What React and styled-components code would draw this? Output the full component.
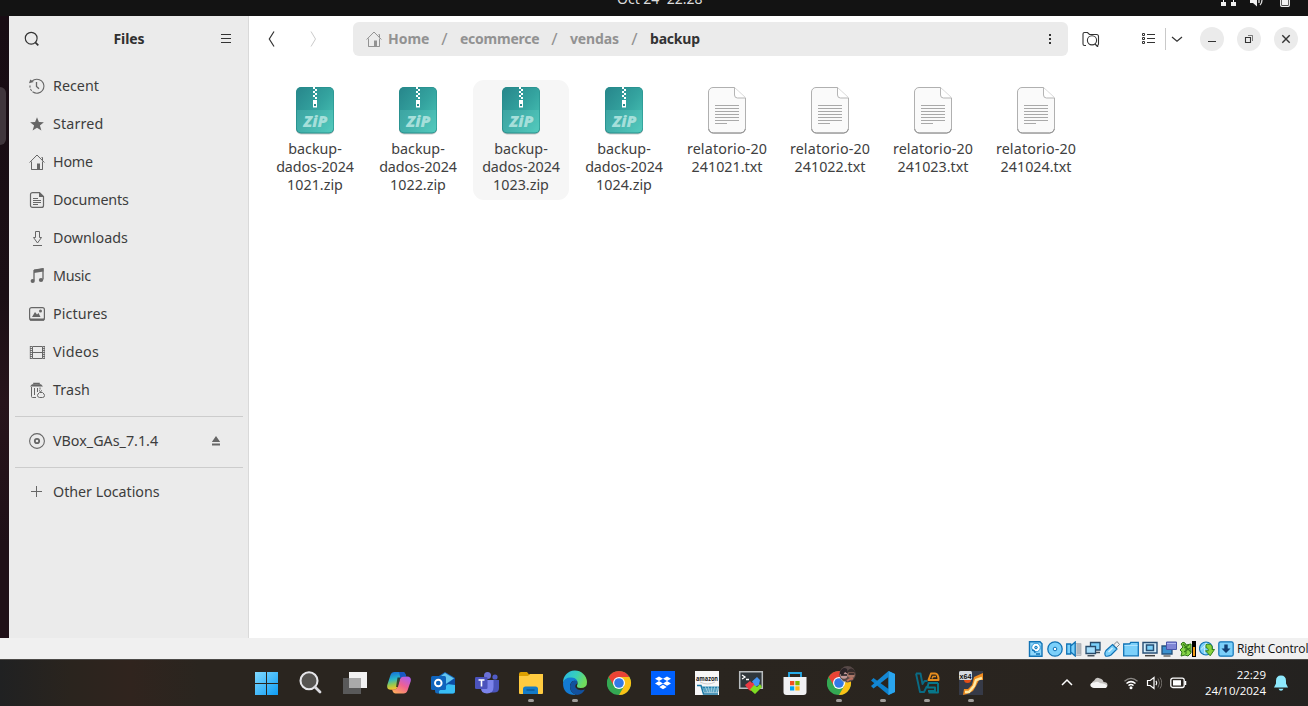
import React from "react";
import styled, { createGlobalStyle } from "styled-components";

const Global = createGlobalStyle`
  * { box-sizing: border-box; }
  body { margin: 0; overflow: hidden; background: #131313; }
  svg { display: block; flex: none; }
`;

const Desktop = styled.div`
  width: 1308px;
  height: 706px;
  display: flex;
  flex-direction: column;
  overflow: hidden;
  font-family: "Noto Sans", "Open Sans", sans-serif;
  font-size: 14.3px;
  color: #3d3d3d;
`;

const TopBar = styled.div`
  height: 16px;
  flex: none;
  background: #131313;
  color: #dcdcdc;
  display: grid;
  grid-template-columns: 617px 86px 1fr;
  overflow: hidden;
`;
const TopClock = styled.div`
  grid-column: 2;
  margin-top: -11px;
  height: 20px;
  line-height: 20px;
  font-size: 14px;
  white-space: pre;
  letter-spacing: ${(p) => p.$track || "0"};
`;
const TopIcons = styled.div`
  display: flex;
  justify-content: flex-end;
  padding-right: 16px;
`;

const Body = styled.div`
  height: 622px;
  display: flex;
  flex: none;
`;
const Dock = styled.div`
  width: 9px;
  flex: none;
  background: linear-gradient(#180c13, #1b0f15 45%, #27141b 62%, #1f1017 85%, #1f1017);
  padding-top: 71px;
`;
const DockTile = styled.div`
  width: 6px;
  height: 58px;
  background: #40363c;
  border-radius: 0 6px 6px 0;
`;

const Sidebar = styled.aside`
  width: 240px;
  flex: none;
  background: #ebebeb;
  border-right: 1px solid #d9d9d9;
`;
const SideHead = styled.div`
  height: 46px;
  padding: 0 14px 0 15px;
  display: flex;
  align-items: center;
  justify-content: space-between;
  color: #333;
  margin-bottom: 5px;
`;
const Title = styled.div`
  font-weight: 700;
  font-size: 14px;
  color: #303030;
  letter-spacing: -0.1px;
  padding-bottom: 2px;
`;
const SideRow = styled.div`
  height: 38px;
  padding: 0 28px 0 20px;
  display: flex;
  align-items: center;
  color: #666;
`;
const SideLabel = styled.span`
  flex: 1;
  margin-left: 8px;
  padding-bottom: 2px;
  color: #3d3d3d;
  letter-spacing: ${(p) => p.$track || "0"};
  white-space: nowrap;
`;
const Separator = styled.div`
  height: 1px;
  margin: ${(p) => p.$top}px 5px 5px 6px;
  background: #cccccc;
`;

const Main = styled.main`
  flex: 1;
  min-width: 0;
  background: #fff;
`;
const Header = styled.header`
  height: 46px;
  display: flex;
  align-items: center;
  color: #333;
  padding-left: 14px;
`;
const NavButton = styled.div`
  width: 18px;
  flex: none;
  margin-right: ${(p) => p.$after}px;
  opacity: ${(p) => (p.$off ? 0.25 : 1)};
`;
const PathBar = styled.div`
  width: 715px;
  height: 34px;
  flex: none;
  border-radius: 6px;
  background: #ebebeb;
  display: flex;
  align-items: center;
  padding: 0 10px 0 13px;
  color: #929292;
`;
const Crumb = styled.span`
  width: ${(p) => p.$w}px;
  padding-bottom: 2px;
  font-weight: 700;
  font-size: 14px;
  white-space: nowrap;
  letter-spacing: ${(p) => p.$track || "0"};
  color: ${(p) => (p.$current ? "#333" : "#929292")};
`;
const Slash = styled.span`
  width: ${(p) => p.$w}px;
  text-align: center;
  font-size: 17px;
  line-height: 20px;
`;
const Spacer = styled.span`
  flex: ${(p) => (p.$w ? "none" : 1)};
  width: ${(p) => p.$w || 0}px;
`;
const VLine = styled.span`
  width: 1px;
  height: 22px;
  background: #c9c9c9;
`;
const RoundButton = styled.span`
  width: 24px;
  height: 24px;
  flex: none;
  border-radius: 50%;
  background: #ebebeb;
  margin-right: ${(p) => (p.$last ? 0 : 13)}px;
  display: flex;
  align-items: center;
  justify-content: center;
`;

const FileGrid = styled.div`
  display: flex;
  gap: 7px;
  padding: 18px 0 0 18px;
  margin-left: ${(p) => p.$shift || 0}px;
`;
const FileCell = styled.div`
  width: 96px;
  height: 120px;
  flex: none;
  margin-left: 0;
  border-radius: 11px;
  background: ${(p) => (p.$hover ? "#f6f6f6" : "transparent")};
  display: flex;
  flex-direction: column;
  align-items: center;
  padding-top: 6px;
`;
const FileName = styled.div`
  margin-top: 4px;
  line-height: 18px;
  text-align: center;
  white-space: pre;
  color: #404040;
`;
const NameLine = styled.div`
  letter-spacing: ${(p) => p.$track || "0"};
`;

const VmBar = styled.div`
  height: 21px;
  flex: none;
  background: #f0f0f0;
  display: flex;
  align-items: center;
  justify-content: flex-end;
  gap: 3px;
`;
const HostKey = styled.span`
  width: 71px;
  font-size: 12px;
  color: #111;
  white-space: nowrap;
  letter-spacing: ${(p) => p.$track || "0"};
  font-family: "Open Sans", "Noto Sans", sans-serif;
`;

const Taskbar = styled.div`
  height: 47px;
  flex: none;
  border-top: 1px solid #4c4a48;
  background: linear-gradient(90deg, #202122 0, #2a241e 70px, #30241e 130px, #2a251f 200px, #2a251f 700px, #29241f 1100px, #242220 100%);
  display: flex;
  color: #fff;
`;
const Apps = styled.div`
  margin-left: 244.5px;
  display: flex;
`;
const AppSlot = styled.div`
  width: 44px;
  padding-top: 11px;
  display: flex;
  flex-direction: column;
  align-items: center;
  svg { overflow: visible; }
`;
const RunDot = styled.span`
  width: 6px;
  height: 3px;
  margin-top: 4px;
  border-radius: 2px;
  background: #a09d9a;
`;
const Tray = styled.div`
  margin-left: 65.5px;
  display: flex;
  align-items: center;
  height: 46px;
`;
const Clock = styled.div`
  width: 72px;
  text-align: right;
  font-family: "Open Sans", "Noto Sans", sans-serif;
  font-size: 11.5px;
  line-height: 16px;
  white-space: nowrap;
  letter-spacing: ${(p) => p.$track || "0"};
`;

const Ico = ({ s = 16, w = s, h = s, vb, children, ...r }) => (
  <svg width={w} height={h} viewBox={vb || `0 0 ${w} ${h}`} fill="none" stroke="currentColor" strokeWidth="1" {...r}>
    {children}
  </svg>
);

const SearchIcon = () => (
  <Ico strokeWidth="1.15"><circle cx="7.200" cy="7.200" r="5.900" /><path d="M11.300 11.300l3 3" strokeWidth="1.700" /></Ico>
);
const MenuIcon = () => (
  <Ico><path d="M3 3.500h10M3 7.500h10M3 11.500h10" /></Ico>
);
const HomeIcon = () => (
  <Ico>
    <path d="M.6 8.500L8 1l7.400 7.500M2.500 7.500v8h4M9.500 15.500h4v-8M12.500 3.500h1v3" />
    <path d="M8 9.500h3v6h-3z" fill="currentColor" stroke="none" />
    <path d="M2.500 15.500h11" />
  </Ico>
);
const RecentIcon = () => (
  <Ico strokeWidth="1.1">
    <path d="M3 3.200A7 7 0 1 1 4 14" />
    <path d="M0 5.200L1.300 1.500l3.500 2.500z" fill="currentColor" stroke="none" />
    <path d="M1 7.500a7 7 0 0 0 3 6.500" strokeDasharray="2.200 1.200" />
    <path d="M7.500 4v4.500l2.500 2.200" strokeWidth="1.300" />
  </Ico>
);
const StarIcon = () => (
  <Ico><path d="M8 1.300l1.900 4.800 5 .2-4 3.200 1.500 5L8 11.700l-4.400 2.800 1.500-5-4-3.200 5-.2z" fill="currentColor" stroke="none" /></Ico>
);
const DocIcon = () => (
  <Ico>
    <path d="M3.500.6h7l4 4v8.800a2 2 0 0 1-2 2h-9a2 2 0 0 1-2-2v-10.800a2 2 0 0 1 2-2z" strokeWidth="1.200" />
    <path d="M10 0l5 5h-5z" fill="currentColor" stroke="none" />
    <path d="M4 6.500h5M4 8.500h8M4 10.500h8M4 12.500h5" />
  </Ico>
);
const DownIcon = () => (
  <Ico><path d="M6.500 1.500h4v6h2L8.500 13 4.500 7.500h2zM4 15.500h9" /></Ico>
);
const MusicIcon = () => (
  <Ico>
    <path d="M5 12.500V2.500l9-1.500v10.500" strokeWidth="1.300" />
    <path d="M5 1.500L14.500 0v3.500L5 5z" fill="currentColor" stroke="none" />
    <ellipse cx="3.700" cy="13" rx="2.100" ry="1.900" fill="currentColor" stroke="none" />
    <ellipse cx="12" cy="12" rx="2.200" ry="1.900" fill="currentColor" stroke="none" />
  </Ico>
);
const PictureIcon = () => (
  <Ico>
    <rect x=".6" y="1.600" width="14.800" height="12.400" rx="2" strokeWidth="1.200" />
    <path d="M1 13h14v1.200H1z" fill="currentColor" />
    <path d="M3 11l3-5 2 2.500 1.500-1.500L11.500 11z" fill="currentColor" stroke="none" />
    <circle cx="11.500" cy="4.900" r="1.500" fill="currentColor" stroke="none" />
  </Ico>
);
const VideoIcon = () => (
  <Ico>
    <path d="M3.500 2.500h10v12h-10zM3.500 8.500h10" />
    <path d="M2 2v13M15 2v13" strokeWidth="1.800" strokeDasharray="1 1" />
    <path d="M1.300 2v13M15.300 2v13" strokeWidth=".8" />
  </Ico>
);
const TrashIcon = () => (
  <Ico>
    <path d="M5 2.500v-1h5v1" strokeWidth="1.600" />
    <path d="M1 4.500L3 2.300h9l2 2.200z" fill="currentColor" stroke="none" />
    <path d="M2.500 5v9.500a1 1 0 0 0 1 1H7M5.500 6v7M8.500 6v4M11 5.500v2" />
    <path d="M10.500 10.500Q8.500 12 8.500 13.500q.3 2 2 2h3q2 0 2-2 0-1.500-2-3zM10 8.500l1.500 1 1.500-1" fill="#ebebeb" />
  </Ico>
);
const DiscIcon = () => (
  <Ico><circle cx="8" cy="8" r="7.400" strokeWidth="1.100" /><circle cx="8" cy="8" r="2.200" strokeWidth="1.800" /></Ico>
);
const PlusIcon = () => <Ico><path d="M7.500 2v11M2 7.500h11" /></Ico>;
const EjectIcon = () => (
  <Ico s={8} h={10}><path d="M4 0l4.200 6h-8.400z M0 7.500h8v2H0z" fill="currentColor" stroke="none" /></Ico>
);

const places = [
  ["Recent", RecentIcon, "0"], ["Starred", StarIcon, ".15px"], ["Home", HomeIcon, "-.2px"],
  ["Documents", DocIcon, "-.15px"], ["Downloads", DownIcon, "0"], ["Music", MusicIcon, "-.3px"],
  ["Pictures", PictureIcon, ".1px"], ["Videos", VideoIcon, ".25px"], ["Trash", TrashIcon, ".1px"],
];

const Place = ({ icon: I, label, track, children }) => (
  <SideRow><I /><SideLabel $track={track}>{label}</SideLabel>{children}</SideRow>
);

const ZipIcon = () => (
  <Ico w={40} h={50} stroke="none">
    <defs>
      <linearGradient id="zip" x1="0" y1="0" x2="1" y2="1">
        <stop offset="0" stopColor="#27868b" /><stop offset=".5" stopColor="#34a39f" /><stop offset="1" stopColor="#4bc8b9" />
      </linearGradient>
    </defs>
    <rect x="1" y="2.500" width="38" height="46" rx="5" fill="#000" opacity=".2" />
    <rect x="1" y="1" width="38" height="46.500" rx="5" fill="#238b88" />
    <rect x="1.500" y="1.500" width="37" height="45" rx="4.500" fill="url(#zip)" />
    <path d="M2 24h36v18a4.500 4.500 0 0 1-4.500 4.500h-27A4.500 4.500 0 0 1 2 42z" fill="#6fd6cb" opacity=".24" />
    {[1, 3, 5, 7, 9, 11].map((y, i) => (
      <rect key={y} x={i % 2 ? 20 : 18} y={y} width="2" height="2" fill="#fff" />
    ))}
    <path d="M18 14h4v7.500h-4z" fill="#fff" /><path d="M19 18h2v2h-2z" fill="#278b8c" />
    <text x="20.500" y="41" textAnchor="middle" fontFamily="Open Sans, sans-serif" fontSize="16.500" fontWeight="800" fontStyle="italic" fill="#a6dfda" textLength="24" lengthAdjust="spacingAndGlyphs">ZiP</text>
  </Ico>
);
const TxtIcon = () => (
  <Ico w={40} h={50}>
    <path d="M6.500 2h20.500l11.500 11v29.500a5 5 0 0 1-5 5h-27a5 5 0 0 1-5-5V7a5 5 0 0 1 5-5z" stroke="none" fill="#000" opacity=".15" />
    <path d="M6 1.500h21.500l11 10.500v30a5 5 0 0 1-5 5H6.500a5 5 0 0 1-5-5V6a4.500 4.500 0 0 1 4.500-4.500z" fill="#fafafa" stroke="#b0b0b0" />
    <path d="M1.700 43a5 5 0 0 0 5 4h27a5 5 0 0 0 4.700-4" stroke="#929292" />
    <path d="M27.500 1.500V9a3 3 0 0 0 3 3h8" fill="#fff" stroke="#b5b5b5" />
    <path d="M8 19.500h24M8 22.500h24M8 25.500h24M8 28.500h24M8 31.500h24M8 34.500h24M8 37.500h12" stroke="#a9a9a9" />
  </Ico>
);

const zips = ["1021", "1022", "1023", "1024"];

const VB = ({ children }) => <Ico stroke="#1173b5" strokeWidth="1">{children}</Ico>;
const SKY = "#7bd0fa";
const vmIcons = [
  <VB><path d="M1.500.7h10.500l2 2v12.600H1.500z" fill="#8ed6fb" strokeWidth="1.400" /><circle cx="8" cy="6.500" r="4.300" fill="#fff" stroke="#2c94d6" /><circle cx="8" cy="6.500" r="1.300" fill={SKY} /><path d="M4 9q3 0 3 3M8 13h4" strokeWidth="1.300" /></VB>,
  <VB><circle cx="8" cy="8" r="7.200" fill={SKY} strokeWidth="1.300" /><circle cx="8" cy="8" r="1.800" fill="#fff" /></VB>,
  <VB><path d="M8 2.500h7v12H8z" fill="#c9ccd0" stroke="#b4b8bd" /><path d="M11 4h4M11 6h4M11 8h4M11 10h4M11 12h4" stroke="#9ba1a7" /><path d="M.7 3h4v10h-4zM4.700 5l4.500-4v14l-4.500-4z" fill={SKY} strokeWidth="1.300" /></VB>,
  <VB><path d="M5.500 1.500h9.500v7.500h-9.500z" fill={SKY} stroke="#274b6b" strokeWidth="1.300" /><path d="M1 5.500h9.500v7H1z" fill="#a4ddfb" stroke="#274b6b" strokeWidth="1.300" /><path d="M11 11.500h4M2.500 14.700h7" stroke="#46515c" strokeWidth="1.400" /></VB>,
  <VB><path d="M9.500 4l3.500-3.500 2.500 3-3.500 3.500z" fill="#eee" stroke="#7e858c" /><path d="M2 9.500l6.500-6 4.500 4.500-6 6q-3 1.800-5.500 1l-.5-1.500q-.5-2 1-4z" fill={SKY} strokeWidth="1.200" /><path d="M4.500 11l4-4" stroke="#d5f1ff" strokeWidth="1.500" /></VB>,
  <VB><path d="M.7 3l6-.2 1-1.500h7.600v13.500H.7z" fill={SKY} strokeWidth="1.300" /><path d="M1.500 4.500h13" stroke="#b0e3ff" /></VB>,
  <VB><path d="M1 1.500h14v10.500H1z" fill="#d5effd" stroke="#274f75" strokeWidth="1.400" /><path d="M4.500 4h7v5.500h-7z" fill={SKY} stroke="#274f75" strokeWidth="1.500" /><path d="M3 14.700h10" stroke="#444" strokeWidth="1.500" /></VB>,
  <VB><path d="M1 5h10v8H1z" fill="#3b91cf" stroke="#24517c" strokeWidth="1.300" /><path d="M5.500 1h10v7.500h-10z" fill="#8086d5" stroke="#4a55aa" /><path d="M6 2.500h9" stroke="#b1b9f1" /><path d="M2.500 15h7" stroke="#555" strokeWidth="1.300" /></VB>,
  <VB><path d="M1 3q2-3 4-1l1 2 5-1v9l-3 3-3-1-4 1 1-4-2-2 3-3z" fill="#85d447" stroke="#2e7516" /><path d="M3 3l8 8M4 7l5-3M4 11l6-4M6 5v8" stroke="#367d19" strokeWidth="1.100" /><path d="M12 0h4v16h-4z" fill="#000" stroke="none" /><path d="M13 6h2v9h-2z" fill="#f29a13" stroke="none" /></VB>,
  <VB><circle cx="7" cy="7.500" r="6.500" fill={SKY} strokeWidth="1.200" /><path d="M2 8.500L8 2M7 2q-3 5-1 11" stroke="#d6f1ff" /><path d="M7 3.500c5-1 7 1 6 5h2.500l-4.300 6.300-4.700-5h2.700c.3-2-.5-3-2.200-3z" fill="#87d23c" stroke="#33811a" /></VB>,
  <VB><rect x=".8" y=".8" width="14.400" height="14.400" rx="1.800" fill={SKY} strokeWidth="1.200" /><path d="M6.300 3.500h3.400v4h2.800L8 12 3.500 7.500h2.800z" fill="#123f72" stroke="none" /></VB>,
];

const T = ({ children }) => <Ico s={24} stroke="none">{children}</Ico>;
const ChromeMark = () => (
  <g>
    <circle cx="12" cy="12" r="12" fill="#34a853" />
    <path d="M12 12L1.600 6A12 12 0 0 1 22.400 6z" fill="#ea4335" />
    <path d="M12 6h10.400A12 12 0 0 1 12 24l5.200-9z" fill="#fbc116" />
    <path d="M1.600 6L6.800 15 12 12V6z" fill="#ea4335" />
    <path d="M1.600 6L6.800 15 11.500 18 8 23.300A12 12 0 0 1 1.600 6z" fill="#34a853" />
    <circle cx="12" cy="12" r="6" fill="#fff" /><circle cx="12" cy="12" r="4.800" fill="#3279e6" />
  </g>
);

const apps = [
  { d: <T>
    <defs><linearGradient id="win" x1="0" y1="0" x2="1" y2="1"><stop offset="0" stopColor="#80d9ff" /><stop offset="1" stopColor="#0d9cf4" /></linearGradient></defs>
    <path d="M0 1h11v11H0zM12 1h11v11H12zM0 13h11v11H0zM12 13h11v11H12z" fill="url(#win)" /></T> },
  { d: <T><circle cx="10" cy="9.800" r="8.500" fill="#565451" stroke="#e6e6ea" strokeWidth="2.100" /><path d="M16 16l5 5" stroke="#dbdbe0" strokeWidth="2.800" strokeLinecap="round" /></T> },
  { d: <T><path d="M6 1h18v16H6z" fill="#f2f2f2" /><path d="M0 7h18v16H0z" fill="#595959" /><path d="M6 7h12v10H6z" fill="#aaa" /></T> },
  { d: <T>
    <defs>
      <linearGradient id="cpa" x1="0" y1="0" x2=".2" y2="1"><stop offset="0" stopColor="#1267da" /><stop offset=".45" stopColor="#29b6c9" /><stop offset=".75" stopColor="#9ac94b" /><stop offset="1" stopColor="#f5c22e" /></linearGradient>
      <linearGradient id="cpb" x1=".8" y1="0" x2=".2" y2="1"><stop offset="0" stopColor="#ac5df0" /><stop offset=".5" stopColor="#ef6191" /><stop offset="1" stopColor="#ffab5c" /></linearGradient>
    </defs>
    <path d="M7.500 1h8q2 0 2.700 2l.8 2.500h-3q-2 0-2.700 2l-3 9q-.8 2.200-3 2.200H4q-4.500 0-3.800-4.500L3.500 4Q4.500 1 7.500 1z" fill="url(#cpa)" />
    <path d="M16.500 5.500H20q4.500 0 3.800 4.500l-3.300 9.500q-1 3-4 3h-8q-2 0-2.700-2L5 18.500h2.500q2 0 2.700-2l3-9q.8-2 3.300-2z" fill="url(#cpb)" />
    <path d="M12 1h4q2 0 2.500 2l.8 2.500h-3q-2 0-2.800 2.200z" fill="#1758c5" /><path d="M10.500 6.500h3l-2.600 9.500H9z" fill="#28241f" opacity=".8" /></T> },
  { d: <T><path d="M4 7.500L14 1l10 6v13q0 2.500-2.500 2.500h-15Q4 22.500 4 20z" fill="#1469bd" /><path d="M6 8l8-6 9 5.500-9 6z" fill="#64c6ef" /><path d="M24 8L8 20v2.500h14q2 0 2-2.500z" fill="#38bef4" /><path d="M16 13l8-6v7z" fill="#0d4da4" /><rect y="5" width="15" height="14" rx="1.500" fill="#0f64bd" /><circle cx="7.300" cy="12" r="3.300" stroke="#fff" strokeWidth="1.900" fill="none" /></T> },
  { d: <T><circle cx="12.500" cy="4.500" r="3.500" fill="#6b71d6" /><circle cx="20" cy="6" r="2.600" fill="#505cc6" /><path d="M16 9h8v8q0 4.500-5 4.500h-3z" fill="#4a54bb" /><path d="M6 9h12.500v7q0 6.500-6.500 6.500T6 16z" fill="#7b83eb" /><rect y="6" width="12.500" height="12" rx="1.200" fill="#4b53bc" /><path d="M3.500 9h6M6.500 9v6.500" stroke="#fff" strokeWidth="1.600" /></T> },
  { run: 1, d: <T><path d="M0 3q0-2 2-2h6l2 2.500h14v5H0z" fill="#dda000" /><path d="M0 5h9l2-2h13v19q0 1-1 1H1q-1 0-1-1z" fill="#ffcb40" /><path d="M4 23v-5q0-2.500 2.500-2.500h10q2.500 0 2.500 2.500v5z" fill="#147bc7" /><path d="M7.500 19h8" stroke="#0b5795" strokeWidth="1.400" /></T> },
  { run: 1, d: <T>
    <defs><linearGradient id="edg" x1="0" y1="0" x2="1" y2=".4"><stop offset="0" stopColor="#27b5eb" /><stop offset=".55" stopColor="#37cfbb" /><stop offset="1" stopColor="#70dc5c" /></linearGradient></defs>
    <path d="M0 12A12 12 0 0 1 24 11q.3 6-6.500 6-4 0-3.500-2.500 1-1.500.3-4Q12 6.500 7 7.500 1 8.500 0 12z" fill="url(#edg)" />
    <path d="M0 12Q1 6.500 8 6.500q5 0 6.500 4Q9 8 7 14q-1 7 6 10Q0 24.500 0 12z" fill="#137bd3" />
    <path d="M14 10q-6-1-7 5-.2 7 7 9 5-.5 8-5.500-7 2-9.500-2-.8-3 1.800-4z" fill="#12519e" /></T> },
  { d: <T><ChromeMark /></T> },
  { d: <T><path d="M0 0h24v24H0z" fill="#0061fe" /><path d="M8 5.500l4 2.300-4 2.300-4-2.300zM16 5.500l4 2.300-4 2.300-4-2.300zM8 10.100l4 2.300-4 2.300-4-2.300zM16 10.100l4 2.300-4 2.300-4-2.300zM12 13.800l3.700 2.200L12 18.300 8.300 16z" fill="#fff" /></T> },
  { d: <T><path d="M0 0h24v24H0z" fill="#f7f7f7" /><text x="1" y="9.500" fontSize="7.500" fontWeight="700" fontFamily="Open Sans, sans-serif" fill="#161616" textLength="22" lengthAdjust="spacingAndGlyphs">amazon</text><path d="M2 14.500h4l2.500 8.500H23" stroke="#1676a3" fill="none" strokeWidth="1.500" /><path d="M7 15.500h17l-1 6H9z" fill="#2381ad" /><path d="M8 18h16M8 20h15M10 15l3 7M13 15l2 7M17 15l-1 7M20 15l-2 7M23 15l-2 7" stroke="#b9dcea" strokeWidth=".7" /><path d="M5 11q8 4 15 0" stroke="#ccc" fill="none" /></T> },
  { d: <T><path d="M.7.700h22.600v16.600H.7z" fill="#30373c" stroke="#b8bcbe" strokeWidth="1.500" /><path d="M3 4l3 2-3 2M7 8.500h3" stroke="#fff" fill="none" strokeWidth="1.300" /><path d="M6 14l5-4 2 2 2-1 1 4-4 5-2-1z" fill="#eb3942" /><path d="M13 10.500l5-4.500 3 3-1 5-4 2-1-3z" fill="#4595f2" /><path d="M11 18.500l4-4.500 3 2 3-3 2 3-7 7z" fill="#7fdc22" /></T> },
  { d: <T><path d="M6 8V2h12v6" fill="none" stroke="#26acea" strokeWidth="1.800" /><path d="M.5 6h23v15q0 3-3 3h-17q-3 0-3-3z" fill="#f1f1f3" /><path d="M7 10h4.300v4.300H7z" fill="#f05022" /><path d="M12.300 10h4.300v4.300h-4.300z" fill="#7db900" /><path d="M7 15.300h4.300v4.200H7z" fill="#00a3ee" /><path d="M12.300 15.300h4.300v4.200h-4.300z" fill="#fdb813" /></T> },
  { run: 1, d: <T><ChromeMark /><circle cx="20.500" cy="3.300" r="8.200" fill="#574947" /><circle cx="17" cy="4" r="3.700" fill="#c29998" /><path d="M13 1q3-6 7-3l1 5-3-2-2 3-3-1z" fill="#292226" /><circle cx="24.200" cy="3.500" r="3.600" fill="#ac7768" /><path d="M20.500 0q3.500-5 7.500 0v1.500h-7.500z" fill="#332a29" /><path d="M14 4h6M21.500 3h6" stroke="#18191d" strokeWidth="1.500" /><path d="M20 10q3-3 6-2" stroke="#be6f60" strokeWidth="1.800" fill="none" /><path d="M14 8q1 3 5 3" stroke="#aaa" fill="none" /></T> },
  { run: 1, d: <T><path d="M17.500 0L24 3v18l-6.500 3L0 9.500 2.500 7 17.500 18z" fill="#0d80cc" /><path d="M17.500 0L0 15l2.500 2.500L17.500 6z" fill="#1487d4" /><path d="M17.500 0L24 3v18l-6.500 3z" fill="#2aa5ee" /></T> },
  { run: 1, d: <T><path d="M1 2.500h4.500L7.500 13 9.500 10h3M1 2.500L5 21h4l3-6" fill="none" stroke="#0a6b84" strokeWidth="1.900" strokeLinejoin="round" /><path d="M23 12h-9.500l-1 4.500H20V20h-7M23 12v9.500H13.500" fill="none" stroke="#08778a" strokeWidth="1.900" strokeLinejoin="round" /><path d="M13.500 9L16 2.500h4q3.500 0 3.500 6.500z" fill="none" stroke="#e68c1d" strokeWidth="2" strokeLinejoin="round" /><path d="M17 7.500l1-2h3" stroke="#e68c1d" strokeWidth="1.500" fill="none" /></T> },
  { run: 1, d: <T><path d="M0 0h24v24H0z" fill="#363a47" /><path d="M4 24l1-6h4l4-4 2-8 9-4v7h-4l-3 6-3 5-6 3z" fill="#f08c20" /><path d="M6 21h4l5-6 2-6 6-2" stroke="#ffe9a3" strokeWidth="2.400" fill="none" /><circle cx="8.500" cy="8.500" r="3.500" fill="#e44e16" /><rect width="13" height="9" rx="1.500" fill="#d6dbe0" /><text x=".5" y="7.500" fontSize="8" fontFamily="Liberation Sans, sans-serif" fontWeight="700" fill="#111" textLength="12" lengthAdjust="spacingAndGlyphs">x64</text></T> },
];

export default function App() {
  return (
    <Desktop>
      <Global />
      <TopBar>
        <TopClock>Oct 24  22:28</TopClock>
        <TopIcons>
          <Ico w={74} h={8} stroke="none">
            <path d="M3 2h5v4H3zM13 2h5v4h-5zM5 0h1v2H5zM15 0h1v2h-1z" fill="#f0f0f0" />
            <path d="M32 0h7v6.500L35 3h-3z" fill="#f0f0f0" /><path d="M41 0v3M44 0q0 3-2 5" stroke="#ddd" strokeWidth="1.300" fill="none" />
            <path d="M62.700 0v5.300q0 1 1 1h6.600q1 0 1-1V0" stroke="#f2f2f2" strokeWidth="1.300" fill="none" /><path d="M64 0h6v5h-6z" fill="#f2f2f2" />
          </Ico>
        </TopIcons>
      </TopBar>
      <Body>
        <Dock><DockTile /></Dock>
        <Sidebar>
          <SideHead><SearchIcon /><Title>Files</Title><MenuIcon /></SideHead>
          {places.map(([n, I, t]) => <Place key={n} label={n} icon={I} track={t} />)}
          <Separator $top={7} />
          <Place label="VBox_GAs_7.1.4" icon={DiscIcon} track="0"><EjectIcon /></Place>
          <Separator $top={7} />
          <Place label="Other Locations" icon={PlusIcon} track="-.03px" />
        </Sidebar>
        <Main>
          <Header>
            <NavButton $after={23}><Ico w={18} h={18}><path d="M11 1.500L6.300 9l4.700 7.500" strokeWidth="1.200" /></Ico></NavButton>
            <NavButton $off $after={31}><Ico w={18} h={18}><path d="M7 1.500L11.500 9 7 16.500" strokeWidth="1" /></Ico></NavButton>
            <PathBar>
              <HomeIcon /><Spacer $w={6} />
              <Crumb $w={41}>Home</Crumb><Slash $w={31}>/</Slash>
              <Crumb $w={79} $track="-.25px">ecommerce</Crumb><Slash $w={31}>/</Slash>
              <Crumb $w={49} $track="-.15px">vendas</Crumb><Slash $w={31}>/</Slash>
              <Crumb $w={50} $current $track="-.2px">backup</Crumb>
              <Spacer />
              <Ico color="#333" stroke="none"><path d="M7 3h2v2H7zM7 7h2v2H7zM7 11h2v2H7z" fill="currentColor" /></Ico>
            </PathBar>
            <Spacer $w={14} />
            <Ico w={18} h={16}><path d="M4 14.500H2.500a1.500 1.500 0 0 1-1.500-1.500V3q0-1.500 1.500-1.500h3l2 2h7q2 0 2 2V13q0 1.500-1.500 1.500" strokeWidth="1.100" /><circle cx="10" cy="9.300" r="4.600" strokeWidth="1.100" /><path d="M13 13l3 3" strokeWidth="1.300" /></Ico>
            <Spacer $w={41} />
            <Ico><path d="M1.500 2.500h2v2h-2zM1.500 6.500h2v2h-2zM1.500 10.500h2v2h-2zM6 3.500h8M6 7.500h8M6 11.500h8" /></Ico>
            <Spacer $w={8} /><VLine /><Spacer $w={3} />
            <Ico><path d="M3 6l5 4.300L13 6" strokeWidth="1.200" /></Ico>
            <Spacer $w={15} />
            <RoundButton><Ico s={12}><path d="M2 8.500h8" strokeWidth="1" /></Ico></RoundButton>
            <RoundButton><Ico s={12}><path d="M2.500 4.500h5v5h-5z" strokeWidth="1.100" /><path d="M5 2.500h4.500V8" opacity=".6" /></Ico></RoundButton>
            <RoundButton $last><Ico s={12}><path d="M2.300 2.300l7.400 7.400M9.700 2.300l-7.400 7.400" strokeWidth="1.400" /></Ico></RoundButton>
          </Header>
          <FileGrid>
            {zips.map((n, i) => (
              <FileCell key={n} $hover={i === 2}>
                <ZipIcon />
                <FileName>
                  <NameLine>backup-</NameLine><NameLine $track="-.07px">dados-2024</NameLine><NameLine>{n}.zip</NameLine>
                </FileName>
              </FileCell>
            ))}
            {zips.map((n) => (
              <FileCell key={n}>
                <TxtIcon />
                <FileName><NameLine $track=".15px">relatorio-20</NameLine><NameLine>24{n}.txt</NameLine></FileName>
              </FileCell>
            ))}
          </FileGrid>
        </Main>
      </Body>
      <VmBar>
        {vmIcons.map((ic, i) => <React.Fragment key={i}>{ic}</React.Fragment>)}
        <HostKey $track="-.15px">Right Control</HostKey>
      </VmBar>
      <Taskbar>
        <Apps>
          {apps.map((a, i) => <AppSlot key={i}>{a.d}{a.run && <RunDot />}</AppSlot>)}
        </Apps>
        <Tray>
          <Ico><path d="M4 10l5-5 5 5" strokeWidth="1.500" /></Ico>
          <Spacer $w={16} />
          <Ico w={18} h={12} stroke="none"><path d="M4.500 11a4 4 0 0 1-.3-7.500Q6-.5 10 1.500q3 .5 3.500 3.500 4 0 4 3 0 3-3 3z" fill="#c7c5c2" /><path d="M4.500 11q-4-.3-4.200-3 .4-3 4-2.500 3.700-2 6 .7 4-.2 6.500 2Q17 11 14.500 11z" fill="#f4f4f3" /></Ico>
          <Spacer $w={15} />
          <Ico><path d="M1.500 6.200q6.500-5.500 13 0" stroke="#8c8986" strokeWidth="1.300" /><path d="M3.500 8.500q4.500-3.800 9 0M5.500 10.600q2.500-2 5 0" strokeWidth="1.500" /><circle cx="8" cy="12.700" r="1.500" fill="#fff" stroke="none" /></Ico>
          <Spacer $w={7} />
          <Ico><path d="M1.500 5.500h2.700L8 2.500v11l-3.800-3H1.500z" strokeWidth="1.200" /><path d="M10 5.800q1.500 2.200 0 4.400" strokeWidth="1.200" /><path d="M12 3.500q3 4.500 0 9M14 2.500q3.700 5.500 0 11" stroke="#75716d" /></Ico>
          <Spacer $w={8} />
          <Ico w={17} h={12}><rect x=".8" y="1.200" width="13.400" height="9.300" rx="2" strokeWidth="1.300" /><path d="M3 3.200h8v5.300H3z" fill="#fff" stroke="none" /><path d="M15.500 4v4" strokeWidth="1.500" /></Ico>
          <Spacer $w={7} />
          <Clock>22:29<br />24/10/2024</Clock>
          <Spacer $w={7} />
          <Ico stroke="none"><path d="M1 12.500l2-4V6q0-5.500 5-5.500T13 6v2.500l2 4z" fill="#8ee9fd" /><path d="M5.500 13.700h5q-.7 2-2.500 2t-2.500-2z" fill="#8ee9fd" /></Ico>
        </Tray>
      </Taskbar>
    </Desktop>
  );
}
